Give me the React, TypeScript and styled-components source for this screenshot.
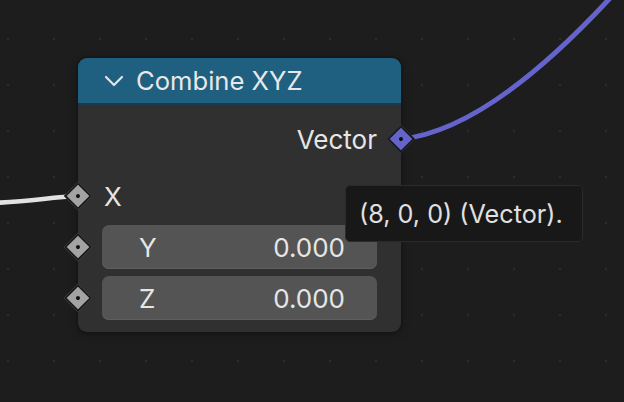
import styled, { createGlobalStyle } from 'styled-components';

const GlobalStyle = createGlobalStyle`
  html, body {
    margin: 0;
    padding: 0;
    background: #1d1d1d;
  }
  body {
    font-family: 'Inter', 'DejaVu Sans', sans-serif;
    color: #e6e6e6;
  }
`;

const Canvas = styled.div`
  position: relative;
  width: 624px;
  height: 402px;
  overflow: hidden;
  background-color: #1d1d1d;
  background-image: radial-gradient(circle, #2c2c2c 1.2px, transparent 1.6px);
  background-size: 46px 46px;
  background-position: -15px 16px;
`;

const Wires = styled.svg`
  position: absolute;
  inset: 0;
  pointer-events: none;
`;

const Node = styled.div`
  position: absolute;
  left: 78px;
  top: 58px;
  width: 323px;
  display: flex;
  flex-direction: column;
  background: #303030;
  border-radius: 9px;
  box-shadow: 0 0 0 1.5px #161616, 0 2px 8px rgba(0, 0, 0, 0.35);
`;

const Header = styled.div`
  height: 45px;
  display: flex;
  align-items: center;
  gap: 12px;
  padding-left: 26px;
  background: #1f6080;
  border-radius: 9px 9px 0 0;
  border-bottom: 2px solid #1c3a4a;
  font-size: 25.6px;
  color: #e8e8e8;
`;

const Body = styled.div`
  display: flex;
  flex-direction: column;
  padding: 12px 24px;
`;

const Row = styled.div<{ $align?: 'left' | 'right'; $gap?: number }>`
  position: relative;
  height: 44px;
  margin-top: ${(p) => p.$gap ?? 0}px;
  display: flex;
  align-items: center;
  justify-content: ${(p) => (p.$align === 'right' ? 'flex-end' : 'flex-start')};
  font-size: 26px;
  color: #e6e6e6;
`;

const RowLabel = styled.span`
  padding-left: 2px;
`;

const Field = styled.div`
  flex: 1;
  height: 44px;
  box-sizing: border-box;
  display: flex;
  align-items: center;
  justify-content: space-between;
  padding: 0 32px 0 37px;
  background: #545454;
  border-radius: 7px;
  box-shadow: inset 0 -1px 0 #5e5e5e;
  font-size: 26px;
  color: #e6e6e6;
`;

const Socket = styled.span<{ $side: 'left' | 'right'; $color: string }>`
  position: absolute;
  top: 50%;
  ${(p) => (p.$side === 'left' ? 'left: -24px;' : 'right: -24px;')}
  width: 16px;
  height: 16px;
  margin: -10px;
  transform: rotate(45deg);
  background: ${(p) => p.$color};
  border: 2px solid #1a1a1a;
  display: flex;
  align-items: center;
  justify-content: center;

  &::after {
    content: '';
    width: 4px;
    height: 4px;
    border-radius: 50%;
    background: #111;
  }
`;

const Tooltip = styled.div`
  position: absolute;
  left: 345px;
  top: 185px;
  width: 238px;
  height: 57px;
  box-sizing: border-box;
  display: flex;
  align-items: center;
  padding-left: 13px;
  background: #181818;
  border: 1px solid #2b2b2b;
  border-radius: 5px;
  font-size: 25.2px;
  color: #e0e0e0;
  white-space: nowrap;
`;

function Chevron() {
  return (
    <svg width="20" height="12" viewBox="0 0 20 12">
      <path d="M2 2 L10 10 L18 2" fill="none" stroke="#e6e6e6" strokeWidth="2.2" strokeLinecap="round" strokeLinejoin="round" />
    </svg>
  );
}

const GREY = '#a3a3a3';
const VECTOR = '#6464cc';

export default function App() {
  return (
    <>
      <GlobalStyle />
      <Canvas>
        <Wires width="624" height="402" viewBox="0 0 624 402">
          <path d="M -10 203 C 30 202, 50 197, 78 196" fill="none" stroke="#e2e2e2" strokeWidth="4.5" />
          <path d="M 401 139 C 460 133, 530 85, 612 -4" fill="none" stroke={VECTOR} strokeWidth="5" />
        </Wires>

        <Node>
          <Header>
            <Chevron />
            <span>Combine XYZ</span>
          </Header>
          <Body>
            <Row $align="right">
              <span>Vector</span>
              <Socket $side="right" $color={VECTOR} />
            </Row>
            <Row $gap={13}>
              <Socket $side="left" $color={GREY} />
              <RowLabel>X</RowLabel>
            </Row>
            <Row $gap={7}>
              <Socket $side="left" $color={GREY} />
              <Field>
                <span>Y</span>
                <span>0.000</span>
              </Field>
            </Row>
            <Row $gap={7}>
              <Socket $side="left" $color={GREY} />
              <Field>
                <span>Z</span>
                <span>0.000</span>
              </Field>
            </Row>
          </Body>
        </Node>

        <Tooltip>(8, 0, 0) (Vector).</Tooltip>
      </Canvas>
    </>
  );
}
